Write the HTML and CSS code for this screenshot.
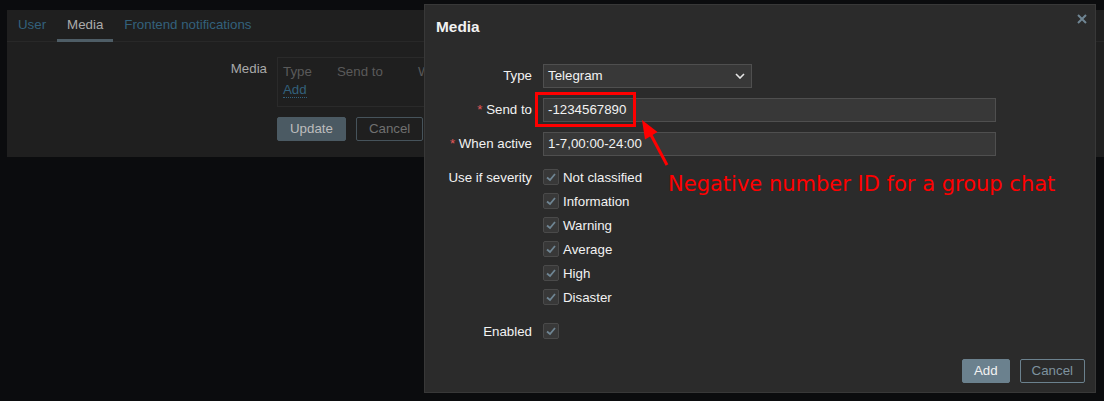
FILE: index.html
```html
<!DOCTYPE html>
<html lang="en">
<head>
<meta charset="utf-8">
<title>Media</title>
<link rel="stylesheet" href="styles.css">
</head>
<body>
<div class="panel">
  <ul class="tabs">
    <li class="tab">User</li>
    <li class="tab active">Media</li>
    <li class="tab">Frontend notifications</li>
  </ul>
  <div class="panel-body">
    <div class="plabel">Media</div>
    <div class="media-box">
      <div class="mhead"><span class="mc1">Type</span><span class="mc2">Send to</span><span class="mc3">When active</span></div>
      <div class="mline"><a class="dlink">Add</a></div>
    </div>
    <div></div>
    <div class="pbtns">
      <button class="btn dim">Update</button>
      <button class="btn-alt dim">Cancel</button>
    </div>
  </div>
</div>

<div class="modal">
  <div class="mhd">
    <h4 class="mtitle">Media</h4>
    <svg class="close" width="10" height="10" viewBox="0 0 10 10"><path d="M1 1 L9 9 M9 1 L1 9" stroke="#6f8593" stroke-width="2" fill="none"/></svg>
  </div>
  <div class="form">
    <div class="lbl">Type</div>
    <div class="ctl"><div class="select"><span>Telegram</span><svg width="10" height="6" viewBox="0 0 10 6"><path d="M1 1 L5 5 L9 1" stroke="#e6e6e6" stroke-width="1.6" fill="none"/></svg></div></div>

    <div class="lbl"><span class="req">*</span> Send to</div>
    <div class="ctl"><div class="input">-1234567890</div></div>

    <div class="lbl"><span class="req">*</span> When active</div>
    <div class="ctl"><div class="input">1-7,00:00-24:00</div></div>

    <div class="lbl">Use if severity</div>
    <ul class="checks">
      <li class="chk"><span class="box"><svg width="14" height="14" viewBox="0 0 14 14"><path d="M3 7.5 L6 10 L11 4" stroke="#6f8593" stroke-width="1.8" fill="none"/></svg></span>Not classified</li>
      <li class="chk"><span class="box"><svg width="14" height="14" viewBox="0 0 14 14"><path d="M3 7.5 L6 10 L11 4" stroke="#6f8593" stroke-width="1.8" fill="none"/></svg></span>Information</li>
      <li class="chk"><span class="box"><svg width="14" height="14" viewBox="0 0 14 14"><path d="M3 7.5 L6 10 L11 4" stroke="#6f8593" stroke-width="1.8" fill="none"/></svg></span>Warning</li>
      <li class="chk"><span class="box"><svg width="14" height="14" viewBox="0 0 14 14"><path d="M3 7.5 L6 10 L11 4" stroke="#6f8593" stroke-width="1.8" fill="none"/></svg></span>Average</li>
      <li class="chk"><span class="box"><svg width="14" height="14" viewBox="0 0 14 14"><path d="M3 7.5 L6 10 L11 4" stroke="#6f8593" stroke-width="1.8" fill="none"/></svg></span>High</li>
      <li class="chk"><span class="box"><svg width="14" height="14" viewBox="0 0 14 14"><path d="M3 7.5 L6 10 L11 4" stroke="#6f8593" stroke-width="1.8" fill="none"/></svg></span>Disaster</li>
    </ul>

    <div class="lbl">Enabled</div>
    <div class="chk"><span class="box"><svg width="14" height="14" viewBox="0 0 14 14"><path d="M3 7.5 L6 10 L11 4" stroke="#6f8593" stroke-width="1.8" fill="none"/></svg></span></div>
  </div>
  <div class="mfoot">
    <button class="btn">Add</button>
    <button class="btn-alt">Cancel</button>
  </div>
</div>

<div class="hl-box"></div>
<svg class="arrow" width="40" height="60" viewBox="630 110 40 60">
  <line x1="667" y1="165" x2="651" y2="135" stroke="#f00" stroke-width="3"/>
  <polygon points="642,120 657.5,132 645,139.5" fill="#f00"/>
</svg>
<div class="note">Negative number ID for a group chat</div>
</body>
</html>
```

FILE: styles.css
```css
* { box-sizing: border-box; }
html, body { margin: 0; padding: 0; }
body {
  background: #0b0c0e;
  width: 1104px;
  height: 401px;
  overflow: hidden;
  font-family: "Liberation Sans", Arial, sans-serif;
  font-size: 13.3px;
  color: #f2f2f2;
  position: relative;
}

.panel {
  margin: 10px 0 0 7px;
  background: #1f1f1f;
  height: 147px;
}
.tabs {
  list-style: none;
  margin: 0;
  padding: 0 0 0 1px;
  display: flex;
  gap: 1px;
  border-bottom: 1px solid #282828;
  height: 32px;
}
.tab {
  padding: 0 10px;
  height: 32px;
  line-height: 29px;
  border-bottom: 3px solid transparent;
  color: #33617c;
}
.tab.active {
  color: #ababab;
  border-bottom-color: #4e5d66;
}
.panel-body {
  display: grid;
  grid-template-columns: 260px 1fr;
  column-gap: 10px;
  row-gap: 10px;
  padding-top: 15px;
}
.plabel {
  text-align: right;
  color: #a9a9a9;
  line-height: 18px;
  padding-top: 3px;
}
.media-box {
  border: 1px solid #2a2a2a;
  border-right: 0;
  padding: 5px 5px 7px;
  height: 50px;
  width: 147px;
  overflow: hidden;
}
.mhead {
  display: flex;
  line-height: 18px;
  color: #5a5a5a;
  white-space: nowrap;
}
.mc1 { width: 54px; flex: none; }
.mc2 { width: 81px; flex: none; }
.mc3 { flex: none; }
.mline { line-height: 18px; }
.dlink {
  color: #33617c;
  border-bottom: 1px dotted #33617c;
}
.pbtns { display: flex; gap: 10px; }

.btn, .btn-alt {
  font-family: inherit;
  font-size: 13.3px;
  height: 24px;
  padding: 0 11px;
  border: 1px solid;
  border-radius: 2px;
  line-height: 22px;
  margin: 0;
}
.btn {
  background: #6b818e;
  border-color: #6b818e;
  color: #f2f2f2;
}
.btn-alt {
  background: transparent;
  border-color: #6b818e;
  color: #7e929e;
}
.btn.dim {
  background: #4b5a63;
  border-color: #4b5a63;
  color: #bdbdbd;
  padding: 0 12px;
}
.btn-alt.dim {
  border-color: #46535b;
  color: #707070;
  padding: 0 12px;
}

/* modal */
.modal {
  position: absolute;
  left: 424px;
  top: 4px;
  width: 672px;
  height: 389px;
  background: #2b2b2b;
  border: 1px solid #383838;
  display: flex;
  flex-direction: column;
}
.mhd {
  display: flex;
  justify-content: space-between;
  align-items: flex-start;
  padding: 13px 8px 0 11px;
}
.mtitle {
  margin: 0;
  font-size: 15.4px;
  font-weight: bold;
  line-height: 18px;
  color: #f2f2f2;
}
.close { margin-top: -4px; }
.form {
  display: grid;
  grid-template-columns: 107px 1fr;
  column-gap: 11px;
  row-gap: 10px;
  margin-top: 28px;
}
.lbl {
  text-align: right;
  line-height: 24px;
  white-space: nowrap;
}
.req { color: #e45959; }
.ctl { display: flex; }
.select, .input {
  height: 24px;
  background: #383838;
  border: 1px solid #4f4f4f;
  padding: 0 4px;
  line-height: 22px;
  color: #f2f2f2;
}
.select {
  width: 209px;
  display: flex;
  justify-content: space-between;
  align-items: center;
  padding-right: 6px;
}
.input { width: 453px; }
.checks { list-style: none; margin: 0; padding: 0; }
.chk {
  display: flex;
  align-items: flex-start;
  height: 24px;
  line-height: 24px;
}
.box {
  width: 16px;
  height: 16px;
  margin-top: 3px;
  margin-right: 4px;
  background: #383838;
  border: 1px solid #4a4a4a;
  border-radius: 2px;
  display: flex;
  align-items: center;
  justify-content: center;
}
.mfoot {
  margin-top: auto;
  display: flex;
  justify-content: flex-end;
  gap: 10px;
  padding: 0 10px 9px 0;
}

/* annotations */
.hl-box {
  position: absolute;
  left: 535px;
  top: 92px;
  width: 101px;
  height: 35px;
  border: 3px solid #f00;
}
.arrow {
  position: absolute;
  left: 630px;
  top: 110px;
}
.note {
  position: absolute;
  left: 668px;
  top: 174px;
  font-family: "DejaVu Sans", sans-serif;
  font-size: 21px;
  line-height: 21px;
  color: #f00;
  white-space: nowrap;
}
```
